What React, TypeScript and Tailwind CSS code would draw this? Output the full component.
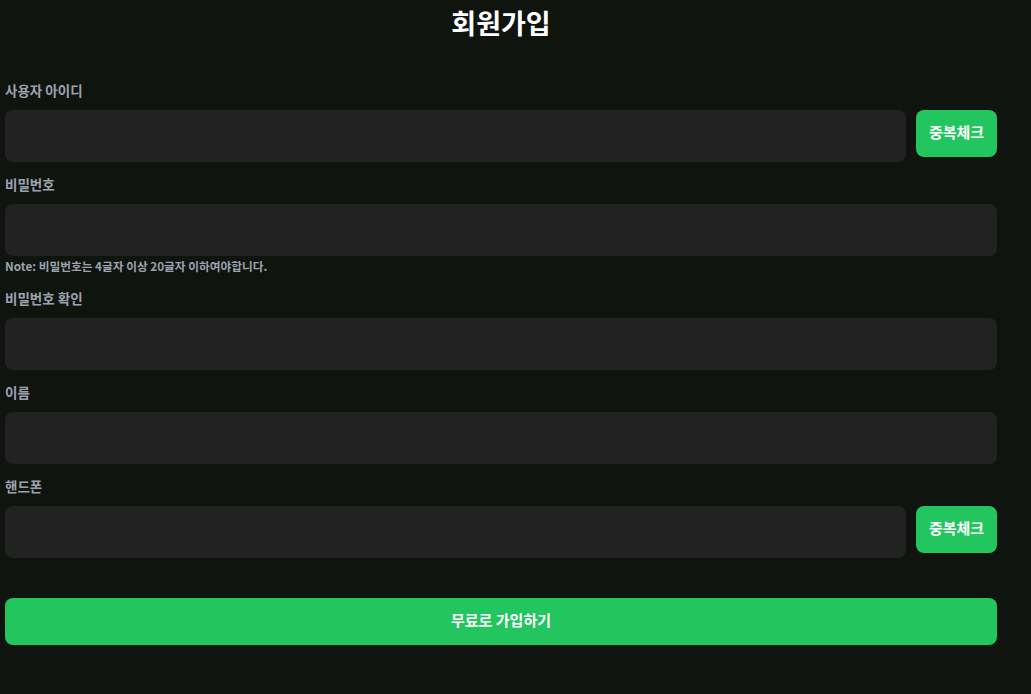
const font = { fontFamily: '"Noto Sans CJK KR", "Noto Sans", sans-serif' }

function Label({ children }: { children: React.ReactNode }) {
  return (
    <label className="block h-5 mb-2 text-[13.5px] leading-4 font-bold text-[#9ca3af]">{children}</label>
  )
}

function Field({ label, check, note }: { label: string; check?: boolean; note?: string }) {
  return (
    <div className="mb-[14px]">
      <Label>{label}</Label>
      <div className="flex items-start gap-[10px]">
        <input className="flex-1 h-[52px] rounded-lg bg-[#222222] px-4 text-white outline-none" />
        {check && (
          <button className="w-[81px] h-[47px] pb-[3px] rounded-lg bg-[#22c55e] text-white text-[15px] font-bold">
            중복체크
          </button>
        )}
      </div>
      {note && <p className="mt-[1px] pb-[2px] text-[11.7px] leading-[17px] font-bold text-[#9ca3af]">{note}</p>}
    </div>
  )
}

export default function App() {
  return (
    <div className="min-h-[694px] bg-[#10140f]" style={font}>
      <div className="w-[992px] ml-[5px]">
        <h1 className="pt-[5px] h-[82px] text-center text-[27px] leading-9 font-bold text-white">회원가입</h1>
        <Field label="사용자 아이디" check />
        <Field label="비밀번호" note="Note: 비밀번호는 4글자 이상 20글자 이하여야합니다." />
        <Field label="비밀번호 확인" />
        <Field label="이름" />
        <Field label="핸드폰" check />
        <button className="mt-[26px] w-full h-[47px] pb-[2px] rounded-lg bg-[#22c55e] text-white text-[15px] font-bold">
          무료로 가입하기
        </button>
      </div>
    </div>
  )
}
